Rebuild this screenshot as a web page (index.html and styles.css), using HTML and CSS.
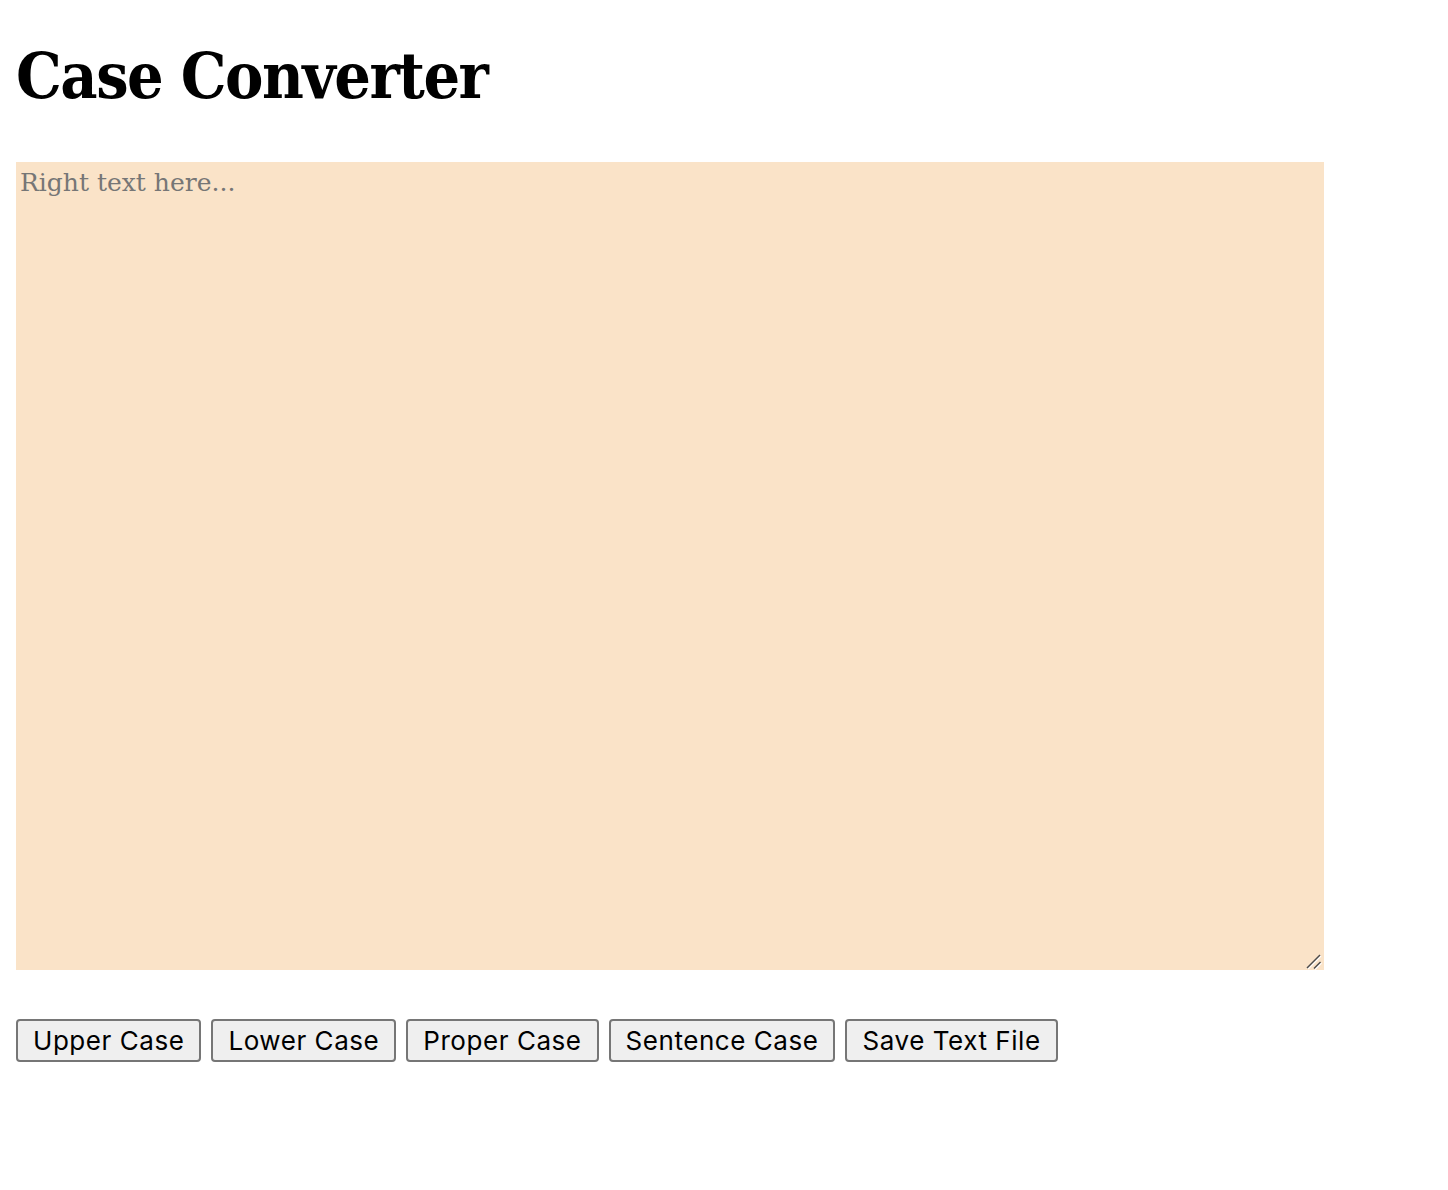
FILE: index.html
```html
<!DOCTYPE html>
<html>
<head>
<meta charset="utf-8">
<title>Case Converter</title>
<link rel="stylesheet" href="styles.css">
</head>
<body>
<main class="app">
  <h1 class="title">Case Converter</h1>
  <div class="editor-wrap">
    <textarea class="editor" placeholder="Right text here..."></textarea>
    <svg class="grip" width="18" height="18" viewBox="0 0 18 18" aria-hidden="true">
      <line x1="3" y1="17" x2="16" y2="4" stroke="#ffffff" stroke-width="1.2"/>
      <line x1="2" y1="16" x2="15" y2="3" stroke="#4a4a4a" stroke-width="1.4"/>
      <line x1="10" y1="17.5" x2="16.5" y2="11" stroke="#ffffff" stroke-width="1.2"/>
      <line x1="9" y1="16.5" x2="15.5" y2="10" stroke="#4a4a4a" stroke-width="1.4"/>
    </svg>
  </div>
  <div class="actions">
    <button class="btn">Upper Case</button>
    <button class="btn">Lower Case</button>
    <button class="btn">Proper Case</button>
    <button class="btn">Sentence Case</button>
    <button class="btn">Save Text File</button>
  </div>
</main>
</body>
</html>
```
FILE: styles.css
```css
html, body {
  margin: 0;
  padding: 0;
  background: #ffffff;
}
.app {
  padding: 0 16px;
}
.title {
  font-family: "DejaVu Serif Condensed", "DejaVu Serif", "Liberation Serif", serif;
  font-weight: bold;
  font-size: 64px;
  line-height: 76px;
  margin: 38px 0 48px 0;
  color: #000;
  letter-spacing: -1.5px;
}
.editor-wrap {
  position: relative;
  width: 1308px;
  height: 808px;
}
.editor {
  display: block;
  box-sizing: border-box;
  width: 1308px;
  height: 808px;
  border: none;
  outline: none;
  resize: none;
  padding: 5px 4px;
  margin: 0;
  background: #fae3c8;
  font-family: "DejaVu Serif", "Liberation Serif", serif;
  font-size: 25px;
  line-height: 32px;
  color: #000;
}
.editor::placeholder {
  color: #767676;
}
.grip {
  position: absolute;
  right: 1px;
  bottom: 0;
  pointer-events: none;
}
.actions {
  display: flex;
  gap: 10px;
  margin-top: 49px;
}
.btn {
  box-sizing: border-box;
  height: 43px;
  padding: 0 15px;
  font-family: "Inter", "Open Sans", sans-serif;
  font-size: 26px;
  letter-spacing: 0.55px;
  color: #000;
  background: #efefef;
  border: 2px solid #767676;
  border-radius: 4px;
}
```
